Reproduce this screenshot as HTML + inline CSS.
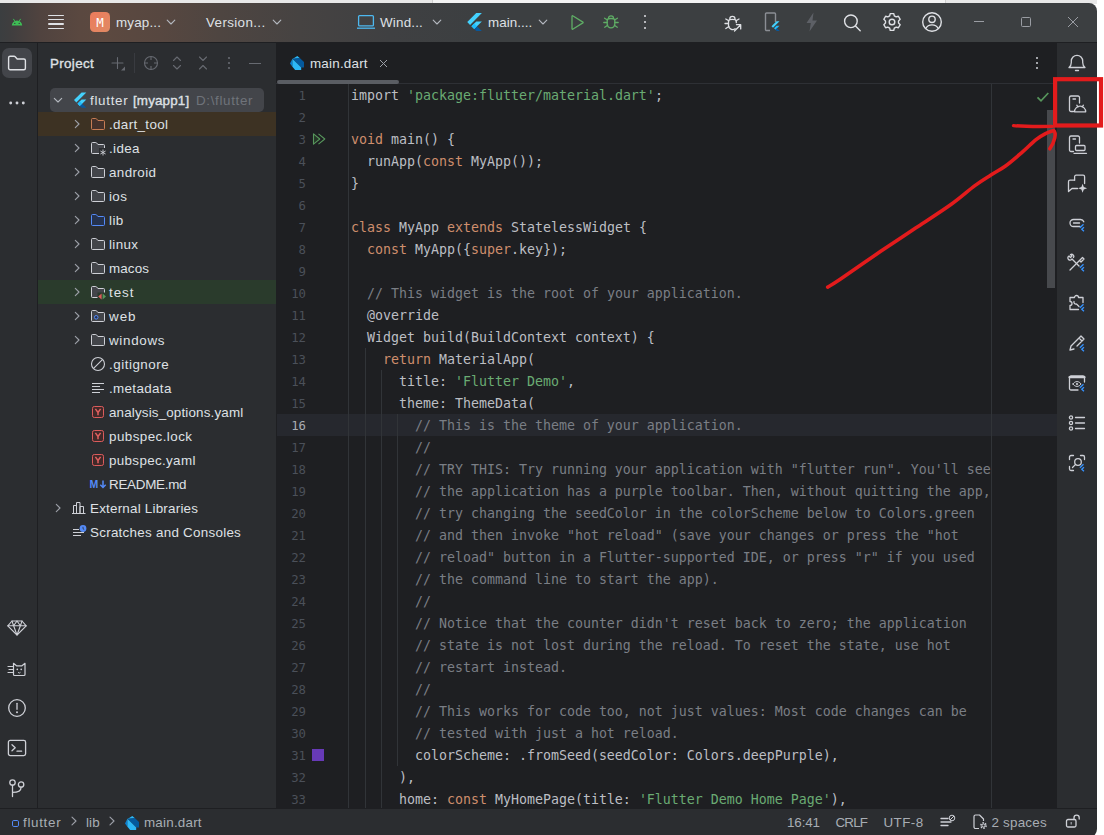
<!DOCTYPE html>
<html lang="en">
<head>
<meta charset="utf-8">
<title>flutter – main.dart</title>
<style>
*{box-sizing:border-box;margin:0;padding:0}
html,body{width:1104px;height:835px;overflow:hidden;background:#fff}
body{position:relative;font-family:"Liberation Sans",sans-serif;font-size:13.4px;color:#dfe1e5}
.abs{position:absolute}
#topstrip{left:0;top:0;width:1097px;height:4px;background:linear-gradient(90deg,#e8e8e8 0,#e8e8e8 432px,#cfcfcf 432px,#cfcfcf 433px,#f3f3f3 433px,#f3f3f3 945px,#cfcfcf 945px,#cfcfcf 946px,#e8e8e8 946px)}
#win{left:0;top:0;width:1097px;height:835px;overflow:hidden}
#title{left:0;top:3px;width:1097px;height:39px;border-top-right-radius:8px;background:linear-gradient(90deg,#3b3e40 0px,#3f3e3f 10px,#50433f 40px,#5a4840 80px,#5c4940 105px,#574740 160px,#4e4541 220px,#464342 300px,#3f4042 390px,#3c3f41 480px,#3c3f41 100%)}
#titleline{left:0;top:42px;width:1097px;height:1px;background:#1e1f22}
.tt{position:absolute;top:12px;font-size:13.4px;line-height:16px;color:#dfe1e5;white-space:nowrap}
#leftstrip{left:0;top:43px;width:38px;height:765px;background:#2b2d30;border-right:1px solid #1e1f22}
#proj{left:38px;top:43px;width:238px;height:765px;background:#2b2d30}
#editor{left:276px;top:43px;width:781px;height:765px;background:#1e1f22;overflow:hidden}
#rightstrip{left:1057px;top:43px;width:40px;height:765px;background:#2b2d30}
#status{left:0;top:808px;width:1097px;height:30px;border-bottom-right-radius:9px;background:#2b2d30;border-top:1px solid #1e1f22}
.row{position:absolute;left:0;width:238px;height:24px;line-height:24px;white-space:nowrap;font-size:13.4px;color:#dfe1e5}
.row span.t{position:absolute;top:1px}
svg{position:absolute;overflow:visible}
.ic{fill:none;stroke:#ced0d6;stroke-width:1.2;stroke-linecap:round;stroke-linejoin:round}
.code{position:absolute;left:75px;top:42px;font-family:"DejaVu Sans Mono","Liberation Mono",monospace;font-size:13.29px;line-height:22px;color:#bcbec4}
.code div{height:22px;white-space:pre}
.k{color:#cf8e6d}.s{color:#6aab73}.c{color:#7a7e85}.a{color:#b3ae60}
.ln{position:absolute;left:0;top:42px;width:30px;text-align:right;font-family:"DejaVu Sans Mono","Liberation Mono",monospace;font-size:12.3px;line-height:22px;color:#4b5059}
.ln div{height:22px}.ln .cur{color:#a9acb3}
.st{position:absolute;top:6px;font-size:13.4px;line-height:16px;color:#a8adb4;white-space:nowrap}
</style>
</head>
<body>
<div id="topstrip" class="abs"></div>
<div id="win" class="abs">
  <div id="title" class="abs">
    <svg style="left:10px;top:13px" width="14" height="12" viewBox="0 0 14 12"><path d="M1.8 9.6a5.2 5.2 0 0 1 10.4 0z" fill="#3ebd55"/><path d="M3.6 3.2l1.3 2.2M10.4 3.2L9.1 5.4" stroke="#3ebd55" stroke-width="1" stroke-linecap="round"/><circle cx="4.8" cy="7.4" r=".7" fill="#3b3d3f"/><circle cx="9.2" cy="7.4" r=".7" fill="#3b3d3f"/></svg>
    <div class="abs" style="left:48px;top:11.6px;width:16px;height:1.3px;background:#dfe1e5;border-radius:1px"></div>
    <div class="abs" style="left:48px;top:16.0px;width:16px;height:1.3px;background:#dfe1e5;border-radius:1px"></div>
    <div class="abs" style="left:48px;top:20.4px;width:16px;height:1.3px;background:#dfe1e5;border-radius:1px"></div>
    <div class="abs" style="left:48px;top:24.8px;width:16px;height:1.3px;background:#dfe1e5;border-radius:1px"></div>
    <div class="abs" style="left:90px;top:9px;width:20px;height:20px;border-radius:4.5px;background:linear-gradient(135deg,#ec7b5c,#e08a64);color:#fff;font-family:'DejaVu Sans Mono','Liberation Mono',monospace;font-size:12.500px;line-height:21px;text-align:center">M</div>
    <div class="tt" style="left:116px;letter-spacing:0.16px" id="t1">myap...</div>
    <svg style="left:163px;top:11.3px" width="16" height="16" viewBox="0 0 16 16"><path d="M4.2 6.2L8 10l3.8-3.8" fill="none" stroke="#b4b8bf" stroke-width="1.1" stroke-linecap="round" stroke-linejoin="round"/></svg>
    <div class="tt" style="left:206px;letter-spacing:0.37px" id="t2">Version...</div>
    <svg style="left:269px;top:11.3px" width="16" height="16" viewBox="0 0 16 16"><path d="M4.2 6.2L8 10l3.8-3.8" fill="none" stroke="#b4b8bf" stroke-width="1.1" stroke-linecap="round" stroke-linejoin="round"/></svg>
    <svg style="left:356px;top:11px" width="20" height="16" viewBox="0 0 20 16"><rect x="2.6" y="1.6" width="14.8" height="10.3" rx="1" fill="none" stroke="#4db8f0" stroke-width="1.3"/><path d="M1 14.2h18" stroke="#4db8f0" stroke-width="1.3"/></svg>
    <div class="tt" style="left:380px;letter-spacing:0.19px" id="t3">Wind...</div>
    <svg style="left:429px;top:11.3px" width="16" height="16" viewBox="0 0 16 16"><path d="M4.2 6.2L8 10l3.8-3.8" fill="none" stroke="#b4b8bf" stroke-width="1.1" stroke-linecap="round" stroke-linejoin="round"/></svg>
    <svg style="left:465px;top:9px" width="18" height="21" viewBox="0 0 16 18.7"><path d="M10 1L2 9l2.5 2.5L15 1z" fill="#44d1fd"/><path d="M10 8.4L5.7 12.7l2.5 2.5 6.8-6.8z" fill="#44d1fd"/><path d="M8.2 15.2L10 17h5l-4.3-4.3z" fill="#08589c"/><path d="M5.7 12.7l2.5-2.5 2.5 2.5-2.5 2.5z" fill="#1fbcfd"/></svg>
    <div class="tt" style="left:488px;letter-spacing:0.06px" id="t4">main....</div>
    <svg style="left:535px;top:11.3px" width="16" height="16" viewBox="0 0 16 16"><path d="M4.2 6.2L8 10l3.8-3.8" fill="none" stroke="#b4b8bf" stroke-width="1.1" stroke-linecap="round" stroke-linejoin="round"/></svg>
    <svg style="left:567px;top:9px" width="20" height="20" viewBox="0 0 20 20"><path d="M5 4.2v12.6c0 .4.4.6.7.4l10.2-6.3c.3-.2.3-.6 0-.8L5.700 3.800c-.3-.2-.7 0-.7.400z" fill="none" stroke="#5fad65" stroke-width="1.3" stroke-linejoin="round"/></svg>
    <svg style="left:601px;top:9px" width="20" height="20" viewBox="0 0 20 20"><g fill="none" stroke="#5fad65" stroke-width="1.3" stroke-linecap="round"><path d="M6.2 8.3c0-1.2 1.7-1.8 3.8-1.8s3.800.6 3.800 1.800v3.700a3.800 3.800 0 0 1-7.600 0z"/><path d="M7.500 6.300a2.500 2.500 0 0 1 5 0"/><path d="M6.200 10.500H2.800M17.200 10.500h-3.400M6.500 8L3.600 6.200M13.500 8l2.900-1.800M6.700 13.200l-3 2M13.300 13.200l3 2"/></g></svg>
    <div class="abs" style="left:644px;top:12.2px;width:2.2px;height:2.2px;border-radius:50%;background:#dfe1e5"></div>
    <div class="abs" style="left:644px;top:17.9px;width:2.2px;height:2.2px;border-radius:50%;background:#dfe1e5"></div>
    <div class="abs" style="left:644px;top:23.5px;width:2.2px;height:2.2px;border-radius:50%;background:#dfe1e5"></div>
    <svg style="left:722px;top:9px" width="22" height="22" viewBox="0 0 22 22"><g fill="none" stroke="#dfe1e5" stroke-width="1.3" stroke-linecap="round" stroke-linejoin="round"><path d="M13.200 16.800a4.200 4.200 0 0 1-6.700-3.300V9.200c0-1.200 1.600-1.800 3.900-1.800s3.900.6 3.900 1.800v1.500"/><path d="M7.800 7.000a2.600 2.600 0 0 1 5.200 0"/><path d="M6.500 11.500H3M6.800 8.800L3.800 7M14 8.800L17 7M6.900 14.500l-3.100 2"/><path d="M12.500 19l6-6M14.500 12.700h4.200v4.200"/></g></svg>
    <svg style="left:762px;top:8px" width="20" height="22" viewBox="0 0 20 22"><path d="M8 19.500H4.500a1 1 0 0 1-1-1V3a1 1 0 0 1 1-1h8a1 1 0 0 1 1 1v8" fill="none" stroke="#8b8e94" stroke-width="1.400"/><path d="M14.500 10.300l-5 5 1.500 1.500 6.500-6.500z" fill="#44d1fd"/><path d="M14.500 14.800l-2.500 2.500 1.500 1.500 4-4z" fill="#1fbcfd"/><path d="M13.500 18.800l1.200 1.200h3l-2.700-2.700z" fill="#08589c"/></svg>
    <svg style="left:803px;top:8px" width="18" height="22" viewBox="0 0 18 22"><path d="M10.500 1.500L3.500 12h4.300l-1.300 8.500L14 9.500H9.500z" fill="#5d6066"/></svg>
    <svg style="left:841px;top:9px" width="22" height="22" viewBox="0 0 22 22"><circle cx="9.900" cy="9.300" r="6.300" fill="none" stroke="#dfe1e5" stroke-width="1.400"/><path d="M14.500 14l4.700 4.700" stroke="#dfe1e5" stroke-width="1.400" stroke-linecap="round"/></svg>
    <svg style="left:881px;top:8px" width="22" height="22" viewBox="0 0 22 22"><path d="M9.21 2.59L12.79 2.59L13.30 4.81L15.21 5.91L17.39 5.25L19.18 8.34L17.51 9.90L17.51 12.10L19.18 13.66L17.39 16.75L15.21 16.09L13.30 17.19L12.79 19.41L9.21 19.41L8.70 17.19L6.79 16.09L4.61 16.75L2.82 13.66L4.49 12.10L4.49 9.90L2.82 8.34L4.61 5.25L6.79 5.91L8.70 4.81z" fill="none" stroke="#dfe1e5" stroke-width="1.400" stroke-linejoin="round"/><circle cx="11" cy="11" r="2.800" fill="none" stroke="#dfe1e5" stroke-width="1.400"/></svg>
    <svg style="left:921px;top:8px" width="22" height="22" viewBox="0 0 22 22"><circle cx="11" cy="11" r="9.300" fill="none" stroke="#dfe1e5" stroke-width="1.400"/><circle cx="11" cy="8.300" r="3.200" fill="none" stroke="#dfe1e5" stroke-width="1.400"/><path d="M4.800 17.500c1.300-2.500 3.500-3.600 6.200-3.600s4.900 1.100 6.200 3.600" fill="none" stroke="#dfe1e5" stroke-width="1.400"/></svg>
    <div class="abs" style="left:974px;top:18px;width:10px;height:1px;background:#9a9da3"></div>
    <div class="abs" style="left:1021px;top:14px;width:10px;height:10px;border:1px solid #9a9da3;border-radius:1.500px"></div>
    <svg style="left:1068px;top:14px" width="10" height="10" viewBox="0 0 10 10"><path d="M0 0l10 10M10 0L0 10" stroke="#9a9da3" stroke-width="1"/></svg>
  </div>
  <div id="titleline" class="abs"></div>
  <div id="leftstrip" class="abs">
    <div class="abs" style="left:2px;top:5px;width:30px;height:30px;border-radius:7px;background:#43454a"></div>
    <svg style="left:7px;top:10px" width="20" height="20" viewBox="0 0 20 20"><g fill="none" stroke="#dfe1e5" stroke-width="1.4" stroke-linecap="round" stroke-linejoin="round"><path d="M1.600 4.800a1.500 1.500 0 0 1 1.500-1.500h4c.4 0 .8.200 1.100.5L10.200 6h6.700a1.500 1.500 0 0 1 1.500 1.500v7.700a1.500 1.500 0 0 1-1.500 1.500H3.100a1.500 1.500 0 0 1-1.500-1.500z"/></g></svg>
    <svg style="left:7.1px;top:56.9px" width="20" height="6" viewBox="0 0 20 6"><circle cx="3.700" cy="3" r="1.450" fill="#ced0d6"/><circle cx="10" cy="3" r="1.450" fill="#ced0d6"/><circle cx="16.300" cy="3" r="1.450" fill="#ced0d6"/></svg>
    <svg style="left:7px;top:577px" width="20" height="16" viewBox="0 0 20 16"><g fill="none" stroke="#ced0d6" stroke-width="1.1" stroke-linecap="round" stroke-linejoin="round"><path d="M5 1h10l4.200 4.800L10 15 .8 5.800z"/><path d="M.8 5.800h18.400M6.600 5.800L10 15l3.400-9.200M5 1l1.600 4.800M15 1l-1.600 4.800M10 1L6.600 5.800M10 1l3.400 4.800"/></g></svg>
    <svg style="left:7px;top:618.5px" width="20" height="14" viewBox="0 0 20 14"><g fill="none" stroke="#ced0d6" stroke-width="1.2" stroke-linecap="round" stroke-linejoin="round"><path d="M6.500 12.500V1.300l3 2.500h5.500l3-2.500v11.200c0 .6-.4 1-1 1H7.500c-.6 0-1-.4-1-1z"/><path d="M1 4.500h5.500M2 7.500h4.500M1 10.500h5.500"/></g><circle cx="10.300" cy="7.300" r=".85" fill="#ced0d6"/><circle cx="14.200" cy="7.300" r=".85" fill="#ced0d6"/><path d="M11 10.300l1.250.8 1.250-.8" fill="none" stroke="#ced0d6" stroke-width=".9"/></svg>
    <svg style="left:7px;top:654.7px" width="20" height="20" viewBox="0 0 20 20"><g fill="none" stroke="#ced0d6" stroke-width="1.3" stroke-linecap="round" stroke-linejoin="round"><circle cx="10" cy="10" r="8.300"/><path d="M10 5.300v6"/></g><circle cx="10" cy="14.300" r="1" fill="#ced0d6"/></svg>
    <svg style="left:7px;top:696.2px" width="20" height="18" viewBox="0 0 20 18"><g fill="none" stroke="#ced0d6" stroke-width="1.3" stroke-linecap="round" stroke-linejoin="round"><rect x="1.400" y="1.400" width="17.200" height="15.200" rx="1.800"/><path d="M5 5.800l3.200 3.000L5 11.800M10 12.200h4.600"/></g></svg>
    <svg style="left:8px;top:735px" width="18" height="20" viewBox="0 0 18 20"><g fill="none" stroke="#ced0d6" stroke-width="1.3" stroke-linecap="round" stroke-linejoin="round"><circle cx="4.500" cy="4.500" r="2.700"/><circle cx="13.100" cy="6.500" r="2.700"/><path d="M4.500 7.200v11.300M13.100 9.200c0 4-3.500 5.200-8.600 5.200"/></g></svg>
  </div>
  <div id="proj" class="abs">
    <div class="abs" style="left:12px;top:13px;font-size:13.400px;line-height:16px;color:#dfe1e5;-webkit-text-stroke:0.350px #dfe1e5;letter-spacing:0.33px" id="projtitle">Project</div>
    <svg style="left:71px;top:12px" width="18" height="18" viewBox="0 0 18 18"><path d="M8.5 2.5v11M3 8h11" fill="none" stroke="#676a71" stroke-width="1.1" stroke-linecap="round"/><path d="M16 11.5v4h-4z" fill="#676a71"/></svg>
    <div class="abs" style="left:96px;top:10px;width:1px;height:20px;background:#393b40"></div>
    <svg style="left:105px;top:12px" width="16" height="16" viewBox="0 0 16 16"><circle cx="8" cy="8" r="6.5" fill="none" stroke="#676a71" stroke-width="1.1"/><path d="M8 1.5v3.5M8 11v3.5M1.5 8h3.5M11 8h3.5" stroke="#676a71" stroke-width="1.1" fill="none"/></svg>
    <svg style="left:131px;top:12px" width="16" height="16" viewBox="0 0 16 16"><path d="M4.5 5.5L8 2l3.5 3.5M4.5 10.5L8 14l3.5-3.5" fill="none" stroke="#676a71" stroke-width="1.1" stroke-linecap="round" stroke-linejoin="round"/></svg>
    <svg style="left:157px;top:12px" width="16" height="16" viewBox="0 0 16 16"><path d="M4.5 2L8 5.5 11.5 2M4.5 14L8 10.5l3.5 3.5" fill="none" stroke="#676a71" stroke-width="1.1" stroke-linecap="round" stroke-linejoin="round"/></svg>
    <svg style="left:183px;top:12px" width="16" height="16" viewBox="0 0 16 16"><circle cx="8" cy="3" r="1.1" fill="#676a71"/><circle cx="8" cy="8" r="1.1" fill="#676a71"/><circle cx="8" cy="13" r="1.1" fill="#676a71"/></svg>
    <div class="abs" style="left:211px;top:19.5px;width:12px;height:1.2px;background:#676a71"></div>
    <div class="abs" style="left:12px;top:45px;width:214px;height:24px;background:#43454a;border-radius:5px"></div>
    <svg style="left:12px;top:49px" width="16" height="16" viewBox="0 0 16 16"><path d="M4.300 6.300L8 10l3.700-3.700" fill="none" stroke="#b4b8bf" stroke-width="1.1" stroke-linecap="round" stroke-linejoin="round"/></svg>
    <svg style="left:34px;top:49px" width="16" height="16" viewBox="0 0 16 16"><path d="M9.6 0.5L2 8.1l2.35 2.35L14.3 0.5z" fill="#44d1fd"/><path d="M9.6 7.6L5.5 11.7l2.35 2.35L9 12.9l5.3-5.3z" fill="#44d1fd"/><path d="M7.85 14.05L9.6 15.8h4.7l-4.1-4.1z" fill="#08589c"/><path d="M5.5 11.7l2.35-2.35 2.35 2.35-2.35 2.35z" fill="#1fbcfd"/></svg>
    <div class="row" style="top:45px"><span class="t" style="left:52px;letter-spacing:0.70px" id="r0a">flutter</span><span class="t" style="left:95px;-webkit-text-stroke:0.350px #dfe1e5;letter-spacing:0.15px" id="r0b">[myapp1]</span><span class="t" style="left:158px;color:#6f737a;letter-spacing:0.65px" id="r0c">D:\flutter</span></div>
    <div class="abs" style="left:0;top:69px;width:238px;height:24px;background:#3d3223"></div>
    <svg style="left:31px;top:73px" width="16" height="16" viewBox="0 0 16 16"><path d="M6.300 4.300L10 8l-3.700 3.700" fill="none" stroke="#9da0a8" stroke-width="1.1" stroke-linecap="round" stroke-linejoin="round"/></svg>
    <svg style="left:52px;top:73px" width="16" height="16" viewBox="0 0 16 16"><path d="M2.5 2.5h3.3c.3 0 .6.15.8.4L7.9 4.5h5.6a1 1 0 0 1 1 1v7a1 1 0 0 1-1 1h-11a1 1 0 0 1-1-1v-9a1 1 0 0 1 1-1z" fill="#45322b" stroke="#c77d55" stroke-width="1"/></svg>
    <div class="row" style="top:69px"><span class="t" style="left:71px;letter-spacing:0.35px" id="r1">.dart_tool</span></div>
    <svg style="left:31px;top:97px" width="16" height="16" viewBox="0 0 16 16"><path d="M6.300 4.300L10 8l-3.700 3.700" fill="none" stroke="#9da0a8" stroke-width="1.1" stroke-linecap="round" stroke-linejoin="round"/></svg>
    <svg style="left:52px;top:97px" width="16" height="16" viewBox="0 0 16 16"><path d="M2.5 2.5h3.3c.3 0 .6.15.8.4L7.9 4.5h5.6a1 1 0 0 1 1 1v7a1 1 0 0 1-1 1h-11a1 1 0 0 1-1-1v-9a1 1 0 0 1 1-1z" fill="#43454a" stroke="#ced0d6" stroke-width="1"/><rect x="9" y="8" width="8" height="8" fill="#2b2d30"/><path d="M13 9.5v6M10.4 11l5.2 3M15.6 11l-5.2 3" stroke="#ced0d6" stroke-width="0.9" fill="none"/></svg>
    <div class="row" style="top:93px"><span class="t" style="left:71px;letter-spacing:0.37px" id="r2">.idea</span></div>
    <svg style="left:31px;top:121px" width="16" height="16" viewBox="0 0 16 16"><path d="M6.300 4.300L10 8l-3.700 3.700" fill="none" stroke="#9da0a8" stroke-width="1.1" stroke-linecap="round" stroke-linejoin="round"/></svg>
    <svg style="left:52px;top:121px" width="16" height="16" viewBox="0 0 16 16"><path d="M2.5 2.5h3.3c.3 0 .6.15.8.4L7.9 4.5h5.6a1 1 0 0 1 1 1v7a1 1 0 0 1-1 1h-11a1 1 0 0 1-1-1v-9a1 1 0 0 1 1-1z" fill="#43454a" stroke="#ced0d6" stroke-width="1"/></svg>
    <div class="row" style="top:117px"><span class="t" style="left:71px;letter-spacing:0.38px" id="r3">android</span></div>
    <svg style="left:31px;top:145px" width="16" height="16" viewBox="0 0 16 16"><path d="M6.300 4.300L10 8l-3.700 3.700" fill="none" stroke="#9da0a8" stroke-width="1.1" stroke-linecap="round" stroke-linejoin="round"/></svg>
    <svg style="left:52px;top:145px" width="16" height="16" viewBox="0 0 16 16"><path d="M2.5 2.5h3.3c.3 0 .6.15.8.4L7.9 4.5h5.6a1 1 0 0 1 1 1v7a1 1 0 0 1-1 1h-11a1 1 0 0 1-1-1v-9a1 1 0 0 1 1-1z" fill="#43454a" stroke="#ced0d6" stroke-width="1"/></svg>
    <div class="row" style="top:141px"><span class="t" style="left:71px;letter-spacing:0.36px" id="r4">ios</span></div>
    <svg style="left:31px;top:169px" width="16" height="16" viewBox="0 0 16 16"><path d="M6.300 4.300L10 8l-3.700 3.700" fill="none" stroke="#9da0a8" stroke-width="1.1" stroke-linecap="round" stroke-linejoin="round"/></svg>
    <svg style="left:52px;top:169px" width="16" height="16" viewBox="0 0 16 16"><path d="M2.5 2.5h3.3c.3 0 .6.15.8.4L7.9 4.5h5.6a1 1 0 0 1 1 1v7a1 1 0 0 1-1 1h-11a1 1 0 0 1-1-1v-9a1 1 0 0 1 1-1z" fill="#25324d" stroke="#548af7" stroke-width="1"/></svg>
    <div class="row" style="top:165px"><span class="t" style="left:71px;letter-spacing:0.46px" id="r5">lib</span></div>
    <svg style="left:31px;top:193px" width="16" height="16" viewBox="0 0 16 16"><path d="M6.300 4.300L10 8l-3.700 3.700" fill="none" stroke="#9da0a8" stroke-width="1.1" stroke-linecap="round" stroke-linejoin="round"/></svg>
    <svg style="left:52px;top:193px" width="16" height="16" viewBox="0 0 16 16"><path d="M2.5 2.5h3.3c.3 0 .6.15.8.4L7.9 4.5h5.6a1 1 0 0 1 1 1v7a1 1 0 0 1-1 1h-11a1 1 0 0 1-1-1v-9a1 1 0 0 1 1-1z" fill="#43454a" stroke="#ced0d6" stroke-width="1"/></svg>
    <div class="row" style="top:189px"><span class="t" style="left:71px;letter-spacing:0.37px" id="r6">linux</span></div>
    <svg style="left:31px;top:217px" width="16" height="16" viewBox="0 0 16 16"><path d="M6.300 4.300L10 8l-3.700 3.700" fill="none" stroke="#9da0a8" stroke-width="1.1" stroke-linecap="round" stroke-linejoin="round"/></svg>
    <svg style="left:52px;top:217px" width="16" height="16" viewBox="0 0 16 16"><path d="M2.5 2.5h3.3c.3 0 .6.15.8.4L7.9 4.5h5.6a1 1 0 0 1 1 1v7a1 1 0 0 1-1 1h-11a1 1 0 0 1-1-1v-9a1 1 0 0 1 1-1z" fill="#43454a" stroke="#ced0d6" stroke-width="1"/></svg>
    <div class="row" style="top:213px"><span class="t" style="left:71px;letter-spacing:0.13px" id="r7">macos</span></div>
    <div class="abs" style="left:0;top:237px;width:238px;height:24px;background:#2a3b2c"></div>
    <svg style="left:31px;top:241px" width="16" height="16" viewBox="0 0 16 16"><path d="M6.300 4.300L10 8l-3.700 3.700" fill="none" stroke="#9da0a8" stroke-width="1.1" stroke-linecap="round" stroke-linejoin="round"/></svg>
    <svg style="left:52px;top:241px" width="16" height="16" viewBox="0 0 16 16"><path d="M2.5 2.5h3.3c.3 0 .6.15.8.4L7.9 4.5h5.6a1 1 0 0 1 1 1v7a1 1 0 0 1-1 1h-11a1 1 0 0 1-1-1v-9a1 1 0 0 1 1-1z" fill="#43454a" stroke="#ced0d6" stroke-width="1"/><rect x="7.5" y="8.5" width="9" height="8" fill="#2a3b2c"/><path d="M11.6 9.6v5.8L8.2 12.5z" fill="#db5c5c"/><path d="M12.6 9.6v5.8L16 12.5z" fill="#57965c"/></svg>
    <div class="row" style="top:237px"><span class="t" style="left:71px;letter-spacing:0.95px" id="r8">test</span></div>
    <svg style="left:31px;top:265px" width="16" height="16" viewBox="0 0 16 16"><path d="M6.300 4.300L10 8l-3.700 3.700" fill="none" stroke="#9da0a8" stroke-width="1.1" stroke-linecap="round" stroke-linejoin="round"/></svg>
    <svg style="left:52px;top:265px" width="16" height="16" viewBox="0 0 16 16"><path d="M2.5 2.5h3.3c.3 0 .6.15.8.4L7.9 4.5h5.6a1 1 0 0 1 1 1v7a1 1 0 0 1-1 1h-11a1 1 0 0 1-1-1v-9a1 1 0 0 1 1-1z" fill="#43454a" stroke="#ced0d6" stroke-width="1"/><circle cx="6.2" cy="9.3" r="1.8" fill="#25324d" stroke="#548af7" stroke-width="1"/></svg>
    <div class="row" style="top:261px"><span class="t" style="left:71px;letter-spacing:0.97px" id="r9">web</span></div>
    <svg style="left:31px;top:289px" width="16" height="16" viewBox="0 0 16 16"><path d="M6.300 4.300L10 8l-3.700 3.700" fill="none" stroke="#9da0a8" stroke-width="1.1" stroke-linecap="round" stroke-linejoin="round"/></svg>
    <svg style="left:52px;top:289px" width="16" height="16" viewBox="0 0 16 16"><path d="M2.5 2.5h3.3c.3 0 .6.15.8.4L7.9 4.5h5.6a1 1 0 0 1 1 1v7a1 1 0 0 1-1 1h-11a1 1 0 0 1-1-1v-9a1 1 0 0 1 1-1z" fill="#43454a" stroke="#ced0d6" stroke-width="1"/></svg>
    <div class="row" style="top:285px"><span class="t" style="left:71px;letter-spacing:0.68px" id="r10">windows</span></div>
    <svg style="left:52px;top:313px" width="16" height="16" viewBox="0 0 16 16"><circle cx="8" cy="8" r="6.5" fill="none" stroke="#ced0d6" stroke-width="1.1"/><path d="M3.6 12.4l8.8-8.8" stroke="#ced0d6" stroke-width="1.1"/></svg>
    <div class="row" style="top:309px"><span class="t" style="left:71px;letter-spacing:0.51px" id="r11">.gitignore</span></div>
    <svg style="left:52px;top:337px" width="16" height="16" viewBox="0 0 16 16"><path d="M2 3.5h12M2 6.5h8M2 9.5h12M2 12.5h8" stroke="#ced0d6" stroke-width="1.1" fill="none"/></svg>
    <div class="row" style="top:333px"><span class="t" style="left:71px;letter-spacing:0.35px" id="r12">.metadata</span></div>
    <svg style="left:52px;top:361px" width="16" height="16" viewBox="0 0 16 16"><rect x="2.500" y="2.500" width="11" height="11" rx="1.800" fill="#402929" stroke="#db5c5c" stroke-width="1"/><path d="M5.400 4.900L8 8.400l2.600-3.500M8 8.400v2.900" fill="none" stroke="#e0605f" stroke-width="1.500" stroke-linecap="butt" stroke-linejoin="miter"/></svg>
    <div class="row" style="top:357px"><span class="t" style="left:71px;letter-spacing:0.16px" id="r13">analysis_options.yaml</span></div>
    <svg style="left:52px;top:385px" width="16" height="16" viewBox="0 0 16 16"><rect x="2.500" y="2.500" width="11" height="11" rx="1.800" fill="#402929" stroke="#db5c5c" stroke-width="1"/><path d="M5.400 4.900L8 8.400l2.600-3.500M8 8.400v2.900" fill="none" stroke="#e0605f" stroke-width="1.500" stroke-linecap="butt" stroke-linejoin="miter"/></svg>
    <div class="row" style="top:381px"><span class="t" style="left:71px;letter-spacing:0.44px" id="r14">pubspec.lock</span></div>
    <svg style="left:52px;top:409px" width="16" height="16" viewBox="0 0 16 16"><rect x="2.500" y="2.500" width="11" height="11" rx="1.800" fill="#402929" stroke="#db5c5c" stroke-width="1"/><path d="M5.400 4.900L8 8.400l2.600-3.500M8 8.400v2.900" fill="none" stroke="#e0605f" stroke-width="1.500" stroke-linecap="butt" stroke-linejoin="miter"/></svg>
    <div class="row" style="top:405px"><span class="t" style="left:71px;letter-spacing:0.34px" id="r15">pubspec.yaml</span></div>
    <div class="abs" style="left:51.500px;top:434px;font-size:10.500px;line-height:14px;font-weight:bold;color:#548af7">M</div><svg style="left:61px;top:433px" width="8" height="16" viewBox="0 0 8 16"><path d="M4 4.500v7M1.300 8.800L4 11.500l2.700-2.700" fill="none" stroke="#548af7" stroke-width="1.500"/></svg>
    <div class="row" style="top:429px"><span class="t" style="left:71px;letter-spacing:-0.26px" id="r16">README.md</span></div>
    <svg style="left:12px;top:457px" width="16" height="16" viewBox="0 0 16 16"><path d="M6.300 4.300L10 8l-3.700 3.700" fill="none" stroke="#9da0a8" stroke-width="1.1" stroke-linecap="round" stroke-linejoin="round"/></svg>
    <svg style="left:33px;top:457px" width="16" height="16" viewBox="0 0 16 16"><path d="M2.5 13.5v-8h3v8zM5.5 13.5v-11h3.5v11zM9 13.5v-7h3.5v7zM1 13.5h13.5" fill="none" stroke="#ced0d6" stroke-width="1" stroke-linejoin="round"/></svg>
    <div class="row" style="top:453px"><span class="t" style="left:52px;letter-spacing:0.22px" id="r17">External Libraries</span></div>
    <svg style="left:33px;top:481px" width="16" height="16" viewBox="0 0 16 16"><path d="M2 5.5h6M2 8.5h11M2 11.5h8" stroke="#ced0d6" stroke-width="1.1" fill="none"/><circle cx="12" cy="4.5" r="3.4" fill="#548af7"/><path d="M12 2.8v1.9l1.2.8" stroke="#2b2d30" stroke-width="0.8" fill="none"/></svg>
    <div class="row" style="top:477px"><span class="t" style="left:52px;letter-spacing:0.27px" id="r18">Scratches and Consoles</span></div>
  </div>
  <div id="editor" class="abs">
    <div class="abs" id="tabline" style="left:0;top:40px;width:781px;height:1px;background:#2e3035"></div>
    <div class="abs" id="tabsel" style="left:1px;top:37px;width:122px;height:4px;background:#5a5d63;border-radius:2px"></div>
    <div class="abs" id="tabtxt" style="left:34px;top:13px;font-size:13.4px;line-height:16px;color:#dfe1e5;white-space:nowrap;letter-spacing:0.22px">main.dart</div>
    <div class="abs" id="curline" style="left:1px;top:371px;width:780px;height:22px;background:#26282e"></div>
    <div class="abs" style="left:72px;top:41px;width:1px;height:730px;background:#313438"></div>
    <div class="abs" style="left:89px;top:305px;width:1px;height:470px;background:#313438"></div>
    <div class="abs" style="left:105px;top:327px;width:1px;height:450px;background:#313438"></div>
    <div class="abs" style="left:121px;top:371px;width:1px;height:352px;background:#313438"></div>
    <div class="abs" style="left:715px;top:41px;width:1px;height:730px;background:#313438"></div>
    <div class="abs" id="scroll" style="left:771px;top:67px;width:8px;height:178px;background:#47494d"></div>
    
    
    
    
    <!--extras--><svg style="left:14px;top:13px" width="14" height="14" viewBox="0 0 14 14"><path d="M7.300 0L10 2.200 2.500 3z" fill="#2cb7f6"/><path d="M2.500 2.800L9.800 2.100 14 6v5.400h-2.800z" fill="#04599c"/><path d="M2.400 2.800L0 7.500l2.400 3.200z" fill="#0c7fd0"/><path d="M2.400 2.800l8.800 8.600V14H5.200l-2.800-3.300z" fill="#2cb7f6"/></svg>
    <svg style="left:103.5px;top:16.799999999999997px" width="7" height="7" viewBox="0 0 7 7"><path d="M0 0l7 7M7 0L0 7" stroke="#9da0a8" stroke-width="1"/></svg>
    <div class="abs" style="left:759.5px;top:14px;width:2px;height:2px;border-radius:50%;background:#ced0d6"></div>
    <div class="abs" style="left:759.5px;top:19px;width:2px;height:2px;border-radius:50%;background:#ced0d6"></div>
    <div class="abs" style="left:759.5px;top:24px;width:2px;height:2px;border-radius:50%;background:#ced0d6"></div>
    <svg style="left:36px;top:89px" width="14" height="14" viewBox="0 0 14 14"><path d="M1.500 1.800v10.400l6.300-5.200z" fill="#253627" stroke="#57965c" stroke-width="1.100" stroke-linejoin="round"/><path d="M6.500 1.800l6.300 5.200-6.300 5.200" fill="none" stroke="#57965c" stroke-width="1.100" stroke-linejoin="round"/></svg>
    <div class="abs" style="left:36px;top:706px;width:12px;height:12px;background:#673ab7"></div>
    <svg style="left:760px;top:48px" width="14" height="12" viewBox="0 0 14 12"><path d="M1.500 6.300l3.500 3.500 7.300-7.800" fill="none" stroke="#57965c" stroke-width="1.700"/></svg><!--/extras-->
    <div class="ln"><div>1</div><div>2</div><div>3</div><div>4</div><div>5</div><div>6</div><div>7</div><div>8</div><div>9</div><div>10</div><div>11</div><div>12</div><div>13</div><div>14</div><div>15</div><div class=cur>16</div><div>17</div><div>18</div><div>19</div><div>20</div><div>21</div><div>22</div><div>23</div><div>24</div><div>25</div><div>26</div><div>27</div><div>28</div><div>29</div><div>30</div><div>31</div><div>32</div><div>33</div></div>
    <div class="code">
<div>import <span class=s>'package:flutter/material.dart'</span>;</div>
<div></div>
<div><span class=k>void</span> main() {</div>
<div>  runApp(<span class=k>const</span> MyApp());</div>
<div>}</div>
<div></div>
<div><span class=k>class</span> MyApp <span class=k>extends</span> StatelessWidget {</div>
<div>  <span class=k>const</span> MyApp({<span class=k>super</span>.key});</div>
<div></div>
<div>  <span class=c>// This widget is the root of your application.</span></div>
<div>  @override</div>
<div>  Widget build(BuildContext context) {</div>
<div>    <span class=k>return</span> MaterialApp(</div>
<div>      title: <span class=s>'Flutter Demo'</span>,</div>
<div>      theme: ThemeData(</div>
<div>        <span class=c>// This is the theme of your application.</span></div>
<div>        <span class=c>//</span></div>
<div>        <span class=c>// TRY THIS: Try running your application with "flutter run". You'll see</span></div>
<div>        <span class=c>// the application has a purple toolbar. Then, without quitting the app,</span></div>
<div>        <span class=c>// try changing the seedColor in the colorScheme below to Colors.green</span></div>
<div>        <span class=c>// and then invoke "hot reload" (save your changes or press the "hot</span></div>
<div>        <span class=c>// reload" button in a Flutter-supported IDE, or press "r" if you used</span></div>
<div>        <span class=c>// the command line to start the app).</span></div>
<div>        <span class=c>//</span></div>
<div>        <span class=c>// Notice that the counter didn't reset back to zero; the application</span></div>
<div>        <span class=c>// state is not lost during the reload. To reset the state, use hot</span></div>
<div>        <span class=c>// restart instead.</span></div>
<div>        <span class=c>//</span></div>
<div>        <span class=c>// This works for code too, not just values: Most code changes can be</span></div>
<div>        <span class=c>// tested with just a hot reload.</span></div>
<div>        colorScheme: .fromSeed(seedColor: Colors.deepPurple),</div>
<div>      ),</div>
<div>      home: <span class=k>const</span> MyHomePage(title: <span class=s>'Flutter Demo Home Page'</span>),</div>
    </div>
  </div>
  <div id="rightstrip" class="abs">
    <svg style="left:10px;top:10px" width="20" height="20" viewBox="0 0 20 20"><g fill="none" stroke="#ced0d6" stroke-width="1.3" stroke-linecap="round" stroke-linejoin="round"><path d="M2 14.500h16c-1.500-1.200-2.300-2.800-2.300-5V8A5.700 5.700 0 0 0 4.300 8v1.500c0 2.200-.8 3.800-2.300 5z"/><path d="M8.500 17.500h3"/></g></svg>
    <svg style="left:10px;top:50.5px" width="20" height="20" viewBox="0 0 20 20"><g fill="none" stroke="#ced0d6" stroke-width="1.3" stroke-linecap="round" stroke-linejoin="round"><path d="M6.500 17.500H4a1.500 1.500 0 0 1-1.500-1.500V3.500A1.500 1.500 0 0 1 4 2h7a1.500 1.500 0 0 1 1.500 1.500V9"/><path d="M6 5h2.500"/><path d="M7.500 17.800a5.600 5.600 0 0 1 11.200 0z"/><path d="M9.800 11.200l1.200 1.800M16.400 11.200l-1.200 1.800"/></g></svg>
    <svg style="left:10px;top:90.5px" width="20" height="20" viewBox="0 0 20 20"><g fill="none" stroke="#ced0d6" stroke-width="1.3" stroke-linecap="round" stroke-linejoin="round"><path d="M6.500 17.500H4a1.500 1.500 0 0 1-1.500-1.500V3.500A1.500 1.500 0 0 1 4 2h7a1.500 1.500 0 0 1 1.500 1.500V9"/><path d="M6 5h2.500"/><rect x="8.500" y="11.500" width="9.500" height="5" rx="1"/><path d="M7 19.300h12.500"/></g></svg>
    <svg style="left:10px;top:130px" width="20" height="20" viewBox="0 0 20 20"><g fill="none" stroke="#ced0d6" stroke-width="1.3" stroke-linecap="round" stroke-linejoin="round"><path d="M7.600 7V3.700a1.500 1.500 0 0 1 1.500-1.500h7A1.500 1.500 0 0 1 17.600 3.700V10.500"/><path d="M10.500 15.500H5L1.500 18.500V8.700A1.500 1.500 0 0 1 3 7.200h4.600"/></g><path d="M15.600 10.800l1.200 3.300 3.300 1.200-3.300 1.200-1.200 3.300-1.200-3.300-3.300-1.200 3.300-1.200z" fill="#ced0d6"/></svg>
    <svg style="left:10px;top:170px" width="20" height="20" viewBox="0 0 20 20"><g fill="none" stroke="#ced0d6" stroke-width="1.3" stroke-linecap="round" stroke-linejoin="round"><path d="M13 13.500H6.500a3.500 3.500 0 0 1 0-7h7a3.500 3.500 0 0 1 3.300 2.300"/><path d="M6.500 10h6"/></g><path d="M16.500 11.200l-3.600 3.600" stroke="#3592ff" stroke-width="1.300" fill="none"/><path d="M17 14.200l-2.300 2 2.300 2" stroke="#3592ff" stroke-width="1.300" fill="none" stroke-linejoin="round"/></svg>
    <svg style="left:10px;top:210px" width="20" height="20" viewBox="0 0 20 20"><g fill="none" stroke="#ced0d6" stroke-width="1.3" stroke-linecap="round" stroke-linejoin="round"><path d="M3 17l9.500-9.500M12.500 7.500l3-3 1.500 1.500-3 3z"/><path d="M12 13l-7-7M5 6a2.200 2.200 0 1 1-3-3l1.500 1.500L5 3 3.500 1.500A2.200 2.200 0 0 1 6.500 4.500"/></g><path d="M16.500 11.200l-3.600 3.600" stroke="#3592ff" stroke-width="1.300" fill="none"/><path d="M17 14.200l-2.300 2 2.300 2" stroke="#3592ff" stroke-width="1.300" fill="none" stroke-linejoin="round"/></svg>
    <svg style="left:10px;top:250px" width="20" height="20" viewBox="0 0 20 20"><g fill="none" stroke="#ced0d6" stroke-width="1.3" stroke-linecap="round" stroke-linejoin="round"><path d="M11.500 16.500H3v-4a2 2 0 0 0 0-4v-4h4.500a2 2 0 0 1 4 0H16v5"/><path d="M7 8.500a2 2 0 0 0 2.500 2.500l2.500 2.500"/></g><path d="M16.500 11.200l-3.600 3.600" stroke="#3592ff" stroke-width="1.300" fill="none"/><path d="M17 14.200l-2.300 2 2.300 2" stroke="#3592ff" stroke-width="1.300" fill="none" stroke-linejoin="round"/></svg>
    <svg style="left:10px;top:290px" width="20" height="20" viewBox="0 0 20 20"><g fill="none" stroke="#ced0d6" stroke-width="1.3" stroke-linecap="round" stroke-linejoin="round"><path d="M3 17l1-4L14 3l3 3-7 7M3 17l4-1M12 5l3 3"/></g><path d="M16.500 11.200l-3.600 3.600" stroke="#3592ff" stroke-width="1.300" fill="none"/><path d="M17 14.200l-2.300 2 2.300 2" stroke="#3592ff" stroke-width="1.300" fill="none" stroke-linejoin="round"/></svg>
    <svg style="left:10px;top:330px" width="20" height="20" viewBox="0 0 20 20"><g fill="none" stroke="#ced0d6" stroke-width="1.3" stroke-linecap="round" stroke-linejoin="round"><path d="M11 17H4a1.500 1.500 0 0 1-1.500-1.500v-11A1.500 1.500 0 0 1 4 3h12a1.500 1.500 0 0 1 1.500 1.500V9"/><path d="M2.500 4.200h15" stroke-width="2.200"/><path d="M6 11c1-1.600 2.400-2.400 4-2.400s3 .8 4 2.400c-1 1.600-2.400 2.400-4 2.400s-3-.8-4-2.400z" stroke-width="1"/></g><circle cx="10" cy="11" r="1.100" fill="#ced0d6"/><path d="M16.500 11.200l-3.600 3.600" stroke="#3592ff" stroke-width="1.300" fill="none"/><path d="M17 14.200l-2.300 2 2.300 2" stroke="#3592ff" stroke-width="1.300" fill="none" stroke-linejoin="round"/></svg>
    <svg style="left:10px;top:370px" width="20" height="20" viewBox="0 0 20 20"><g fill="none" stroke="#ced0d6" stroke-width="1.3" stroke-linecap="round" stroke-linejoin="round"><circle cx="4" cy="4.500" r="1.600"/><circle cx="4" cy="10" r="1.600"/><circle cx="4" cy="15.500" r="1.600"/><path d="M8.500 4.500h9M8.500 10h9M8.500 15.500h9"/></g></svg>
    <svg style="left:10px;top:410px" width="20" height="20" viewBox="0 0 20 20"><g fill="none" stroke="#ced0d6" stroke-width="1.3" stroke-linecap="round" stroke-linejoin="round"><path d="M2.500 6.500v-2.500a1.500 1.500 0 0 1 1.500-1.500h2.500M13.500 2.500H16a1.500 1.500 0 0 1 1.500 1.500v2.500M2.500 13.500V16a1.500 1.500 0 0 0 1.500 1.500h2.500"/><circle cx="11" cy="9" r="3.300"/><path d="M8.600 11.400L5.500 14.500"/></g><path d="M16.500 11.200l-3.600 3.600" stroke="#3592ff" stroke-width="1.300" fill="none"/><path d="M17 14.200l-2.300 2 2.300 2" stroke="#3592ff" stroke-width="1.300" fill="none" stroke-linejoin="round"/></svg>
  </div>
  <div id="status" class="abs">
    <div class="abs" style="left:11.500px;top:10.5px;width:7.500px;height:7.500px;border:1.300px solid #548af7;border-radius:1.800px"></div>
    <div class="st" style="left:23px;letter-spacing:0.69px" id="s1">flutter</div>
    <svg style="left:68px;top:6px" width="12" height="12" viewBox="0 0 12 12"><path d="M4 2.200l4 3.800-4 3.800" fill="none" stroke="#9da0a8" stroke-width="1.100" stroke-linecap="round" stroke-linejoin="round"/></svg>
    <div class="st" style="left:86px;letter-spacing:0.10px" id="s2">lib</div>
    <svg style="left:106px;top:6px" width="12" height="12" viewBox="0 0 12 12"><path d="M4 2.200l4 3.800-4 3.800" fill="none" stroke="#9da0a8" stroke-width="1.100" stroke-linecap="round" stroke-linejoin="round"/></svg>
    <svg style="left:125px;top:6.5px" width="14" height="14" viewBox="0 0 14 14"><path d="M7.300 0L10 2.200 2.500 3z" fill="#2cb7f6"/><path d="M2.500 2.800L9.800 2.100 14 6v5.400h-2.800z" fill="#04599c"/><path d="M2.400 2.800L0 7.500l2.400 3.200z" fill="#0c7fd0"/><path d="M2.400 2.800l8.800 8.600V14H5.200l-2.800-3.300z" fill="#2cb7f6"/></svg>
    <div class="st" style="left:144px;letter-spacing:0.22px" id="s3">main.dart</div>
    <div class="st" style="left:787px;letter-spacing:-0.12px" id="s4">16:41</div>
    <div class="st" style="left:835.500px;letter-spacing:-0.82px" id="s5">CRLF</div>
    <div class="st" style="left:883.500px;letter-spacing:0.41px" id="s6">UTF-8</div>
    <svg style="left:940px;top:5px" width="16" height="16" viewBox="0 0 16 16"><path d="M1 4.500h7M1 8h10M1 11.500h7" stroke="#ced0d6" stroke-width="1.300" fill="none" stroke-linecap="round"/><circle cx="12" cy="4" r="2.800" fill="none" stroke="#ced0d6" stroke-width="1"/><path d="M10 6l4-4" stroke="#ced0d6" stroke-width="1"/></svg>
    <svg style="left:972px;top:4px" width="16" height="17" viewBox="0 0 16 17"><path d="M7 15.500H3.500a1.500 1.500 0 0 1-1.500-1.500V3.500A1.500 1.500 0 0 1 3.500 2h4l4 4v2" fill="none" stroke="#ced0d6" stroke-width="1.200" stroke-linejoin="round"/><circle cx="11.500" cy="12.500" r="2.600" fill="none" stroke="#ced0d6" stroke-width="1.600" stroke-dasharray="1.500 1.200"/><circle cx="11.500" cy="12.500" r="1.500" fill="none" stroke="#ced0d6" stroke-width="1"/></svg>
    <div class="st" style="left:991.500px;letter-spacing:0.22px" id="s7">2 spaces</div>
    <svg style="left:1065px;top:4px" width="16" height="16" viewBox="0 0 16 16"><rect x="1.500" y="6.500" width="9.500" height="7.500" rx="1.500" fill="none" stroke="#ced0d6" stroke-width="1.300"/><path d="M9 6.500V4.800a2.600 2.600 0 0 1 5.200 0V6" fill="none" stroke="#ced0d6" stroke-width="1.300" stroke-linecap="round"/><rect x="5.500" y="9" width="1.500" height="2.500" fill="#8b8e94"/></svg>
  </div>
</div>
<svg id="annot" style="left:0;top:0" width="1104" height="835" viewBox="0 0 1104 835"><g fill="none" stroke="#e31b1c" stroke-linecap="round" stroke-linejoin="round">
  <rect x="1055.100" y="79.200" width="45.900" height="46.300" stroke-width="4.200" stroke-linejoin="miter"/>
  <path d="M1013.500 125.600C1026 126.800 1040 126.600 1052 126.400" stroke-width="3.400"/>
  <path d="M827.7 287.1C829.9 285.8 831.8 285.1 840.6 279.1C849.4 273.1 868.1 259.9 880.7 251.3C893.3 242.8 904.2 235.7 916.0 227.8C927.8 220.0 941.5 211.2 951.3 204.2C961.1 197.2 968.2 190.5 974.9 185.6C981.6 180.7 986.2 178.1 991.3 174.8C996.4 171.5 1000.4 169.7 1005.5 166.0C1010.6 162.3 1016.9 156.8 1022.0 152.4C1027.1 148.0 1032.1 142.7 1036.0 139.6C1039.9 136.5 1042.6 135.1 1045.5 133.6C1048.4 132.1 1052.2 131.1 1053.6 130.6" stroke-width="3.6"/>
  <path d="M1053.6 130.6C1056.8 133 1054.8 141.5 1049.8 148.8" stroke-width="3.6"/>
</g></svg>
</body>
</html>
